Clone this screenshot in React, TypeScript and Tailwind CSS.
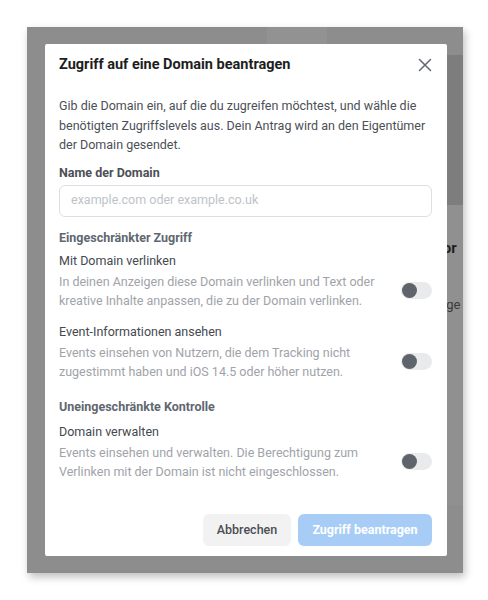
import React from "react";

function Toggle() {
  return (
    <div className="w-[31px] h-[17px] rounded-full bg-[#e9eaec] flex items-center px-[1px] shrink-0">
      <div className="w-[15px] h-[15px] rounded-full bg-[#5f636b]" />
    </div>
  );
}

function Option({ title, desc }: { title: string; desc: string[] }) {
  return (
    <div className="flex flex-col">
      <div className="text-[12.5px] leading-[18px] text-[#444950] font-normal">{title}</div>
      <div className="flex items-center justify-between mt-[2px]">
        <div className="text-[12.5px] leading-[19px] text-[#a0a3a9]">
          {desc.map((d, i) => (
            <div key={i}>{d}</div>
          ))}
        </div>
        <Toggle />
      </div>
    </div>
  );
}

export default function App() {
  return (
    <div className="w-[488px] h-[600px] bg-white pt-[27px] pl-[27px]" style={{ fontFamily: "Roboto, 'Noto Sans', sans-serif" }}>
      <div className="relative w-[436px] h-[546px] bg-[#8d8d8d] shadow-[2px_4px_8px_rgba(0,0,0,0.25)] pt-[17px] pl-[18px] overflow-hidden">
        {/* background content behind the overlay */}
        <div className="absolute left-[393px] top-[28px] w-[60px] h-[150px] rounded-tl-[10px] bg-[#7d7d7d]" />
        <div className="absolute left-[393px] top-[178px] w-[60px] h-[300px] bg-[#909090]" />
        <div className="absolute left-[406px] top-[212px] text-[15px] leading-[18px] font-bold text-[#1f1f1f]">Dor</div>
        <div className="absolute left-[412px] top-[270px] text-[13px] leading-[16px] text-[#3a3a3a]">uge</div>
        <div className="absolute left-[240px] top-0 w-[60px] h-[17px] bg-[#929292]" />

        <div className="relative w-[402px] h-[512px] bg-white rounded-[2px] flex flex-col px-[14px]">
          <div className="flex items-center justify-between h-[40px] mt-[1px]">
            <div className="text-[14.5px] font-bold text-[#1c1e21]">Zugriff auf eine Domain beantragen</div>
            <svg width="14" height="14" viewBox="0 0 14 14" className="mr-[1px]">
              <path d="M1.5 1.5 L12.5 12.5 M12.5 1.5 L1.5 12.5" stroke="#606770" strokeWidth="1.5" strokeLinecap="round" />
            </svg>
          </div>
          <div className="mt-[11px] text-[12.5px] leading-[19.5px] text-[#4b4f56]">
            <div>Gib die Domain ein, auf die du zugreifen möchtest, und wähle die</div>
            <div>benötigten Zugriffslevels aus. Dein Antrag wird an den Eigentümer</div>
            <div>der Domain gesendet.</div>
          </div>
          <div className="mt-[9px] text-[12.5px] leading-[18px] font-bold text-[#4b4f56]">Name der Domain</div>
          <div className="mt-[3px] h-[32px] w-[373px] rounded-[6px] border border-[#dddfe2] flex items-center px-[11px] text-[12.5px] text-[#bec3c9]">
            example.com oder example.co.uk
          </div>
          <div className="mt-[12px] text-[12.5px] leading-[18px] font-bold text-[#606770]">Eingeschränkter Zugriff</div>
          <div className="mt-[5px] w-[373px]">
            <Option
              title="Mit Domain verlinken"
              desc={[
                "In deinen Anzeigen diese Domain verlinken und Text oder",
                "kreative Inhalte anpassen, die zu der Domain verlinken.",
              ]}
            />
          </div>
          <div className="mt-[13px] w-[373px]">
            <Option
              title="Event-Informationen ansehen"
              desc={[
                "Events einsehen von Nutzern, die dem Tracking nicht",
                "zugestimmt haben und iOS 14.5 oder höher nutzen.",
              ]}
            />
          </div>
          <div className="mt-[17px] text-[12.5px] leading-[18px] font-bold text-[#606770]">Uneingeschränkte Kontrolle</div>
          <div className="mt-[7px] w-[373px]">
            <Option
              title="Domain verwalten"
              desc={[
                "Events einsehen und verwalten. Die Berechtigung zum",
                "Verlinken mit der Domain ist nicht eingeschlossen.",
              ]}
            />
          </div>
          <div className="flex justify-end gap-[7px] mt-auto mb-[10px] w-[373px]">
            <div className="h-[32px] w-[88px] rounded-[6px] bg-[#f2f2f2] flex items-center justify-center text-[12.5px] font-medium text-[#4b4f56]">
              Abbrechen
            </div>
            <div className="h-[32px] w-[134px] rounded-[6px] bg-[#a7cdf6] flex items-center justify-center text-[12.5px] font-bold text-white">
              Zugriff beantragen
            </div>
          </div>
        </div>
      </div>
    </div>
  );
}
